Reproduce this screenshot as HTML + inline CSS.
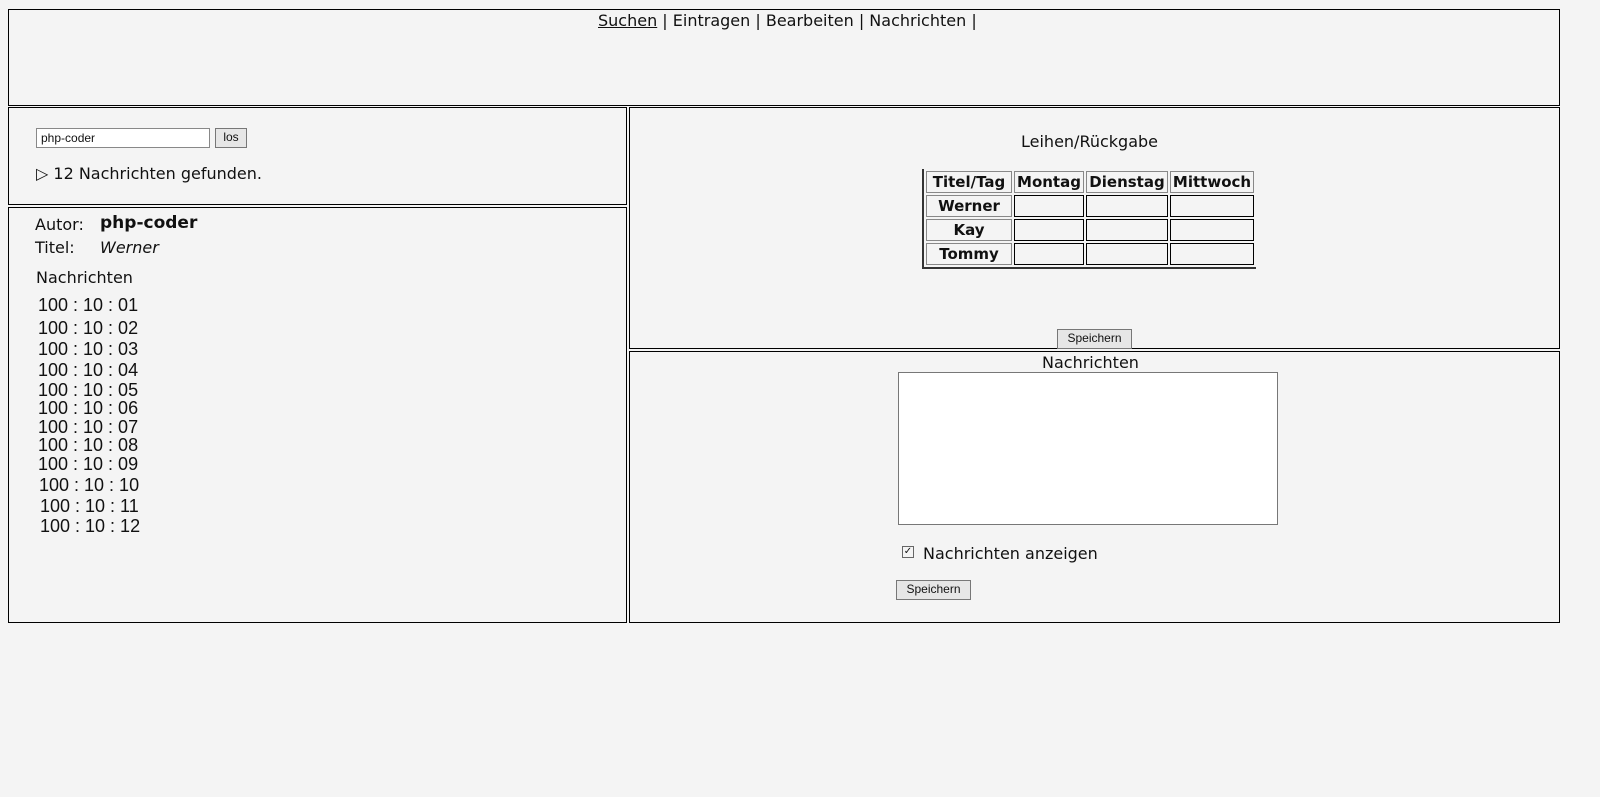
<!DOCTYPE html>
<html><head><meta charset="utf-8">
<style>
body{margin:0;background:#f4f4f4;width:1600px;height:797px;position:relative;font-family:"DejaVu Sans","Liberation Sans",sans-serif;color:#111;overflow:hidden}
.b{position:absolute;border:1px solid #000;box-sizing:border-box}
.a{position:absolute;white-space:nowrap}
.btn{position:absolute;border:1px solid #777;background:#e6e6e6;font-family:"Liberation Sans",Arial,sans-serif;font-size:12px;text-align:center;box-sizing:border-box;line-height:17px}
.n{position:absolute;left:38px;font-family:"Liberation Sans",Arial,sans-serif;font-size:18px;line-height:20px}
table{border-collapse:separate;border-spacing:2px}
td{border:1px solid #000;height:20px;padding:0;font-weight:bold;font-size:15px;text-align:center}
</style></head><body>
<div class="b" style="left:8px;top:9px;width:1552px;height:97px"></div>
<div class="a" style="left:598px;top:11px;font-size:16px"><u>Suchen</u> | Eintragen | Bearbeiten | Nachrichten |</div>

<div class="b" style="left:8px;top:107px;width:619px;height:98px"></div>
<div class="a" style="left:36px;top:128px;width:174px;height:20px;border:1px solid #888;background:#fff;box-sizing:border-box;font-family:'Liberation Sans',Arial,sans-serif;font-size:12px;line-height:18px;padding-left:4px">php-coder</div>
<div class="btn" style="left:215px;top:128px;width:32px;height:20px">los</div>
<div class="a" style="left:36px;top:164px;font-size:16px">▷ 12 Nachrichten gefunden.</div>

<div class="b" style="left:8px;top:207px;width:619px;height:416px"></div>
<div class="a" style="left:35px;top:215px;font-size:16px">Autor:</div>
<div class="a" style="left:100px;top:213px;font-size:17px;font-weight:bold">php-coder</div>
<div class="a" style="left:35px;top:238px;font-size:16px">Titel:</div>
<div class="a" style="left:100px;top:238px;font-size:16px;font-style:italic">Werner</div>
<div class="a" style="left:36px;top:268px;font-size:16px">Nachrichten</div>
<div class="n" style="top:295px">100 : 10 : 01</div>
<div class="n" style="top:318px">100 : 10 : 02</div>
<div class="n" style="top:339px">100 : 10 : 03</div>
<div class="n" style="top:360px">100 : 10 : 04</div>
<div class="n" style="top:380px">100 : 10 : 05</div>
<div class="n" style="top:398px">100 : 10 : 06</div>
<div class="n" style="top:417px">100 : 10 : 07</div>
<div class="n" style="top:435px">100 : 10 : 08</div>
<div class="n" style="top:454px">100 : 10 : 09</div>
<div class="n" style="top:475px;left:39px">100 : 10 : 10</div>
<div class="n" style="top:496px;left:40px">100 : 10 : 11</div>
<div class="n" style="top:516px;left:40px">100 : 10 : 12</div>

<div class="b" style="left:629px;top:107px;width:931px;height:242px"></div>
<div class="a" style="left:1021px;top:132px;font-size:16px">Leihen/Rückgabe</div>
<div class="a" style="left:922px;top:169px;border-left:2px solid #333;border-bottom:2px solid #333">
<table><tr><td style="border-color:#888;width:84px">Titel/Tag</td><td style="border-color:#888;width:68px">Montag</td><td style="border-color:#888;width:80px">Dienstag</td><td style="border-color:#888;width:82px">Mittwoch</td></tr>
<tr><td style="border-color:#888">Werner</td><td></td><td></td><td></td></tr>
<tr><td style="border-color:#888">Kay</td><td></td><td></td><td></td></tr>
<tr><td style="border-color:#888">Tommy</td><td></td><td></td><td></td></tr></table></div>
<div class="btn" style="left:1057px;top:329px;width:75px;height:20px">Speichern</div>

<div class="b" style="left:629px;top:351px;width:931px;height:272px"></div>
<div class="a" style="left:1042px;top:353px;font-size:16px">Nachrichten</div>
<div class="a" style="left:898px;top:372px;width:380px;height:153px;border:1px solid #777;background:#fff;box-sizing:border-box"></div>
<div class="a" style="left:902px;top:546px;width:12px;height:12px;border:1px solid #666;box-sizing:border-box;font-size:10px;line-height:10px;text-align:center">✓</div>
<div class="a" style="left:923px;top:544px;font-size:16px">Nachrichten anzeigen</div>
<div class="btn" style="left:896px;top:580px;width:75px;height:20px">Speichern</div>
</body></html>
